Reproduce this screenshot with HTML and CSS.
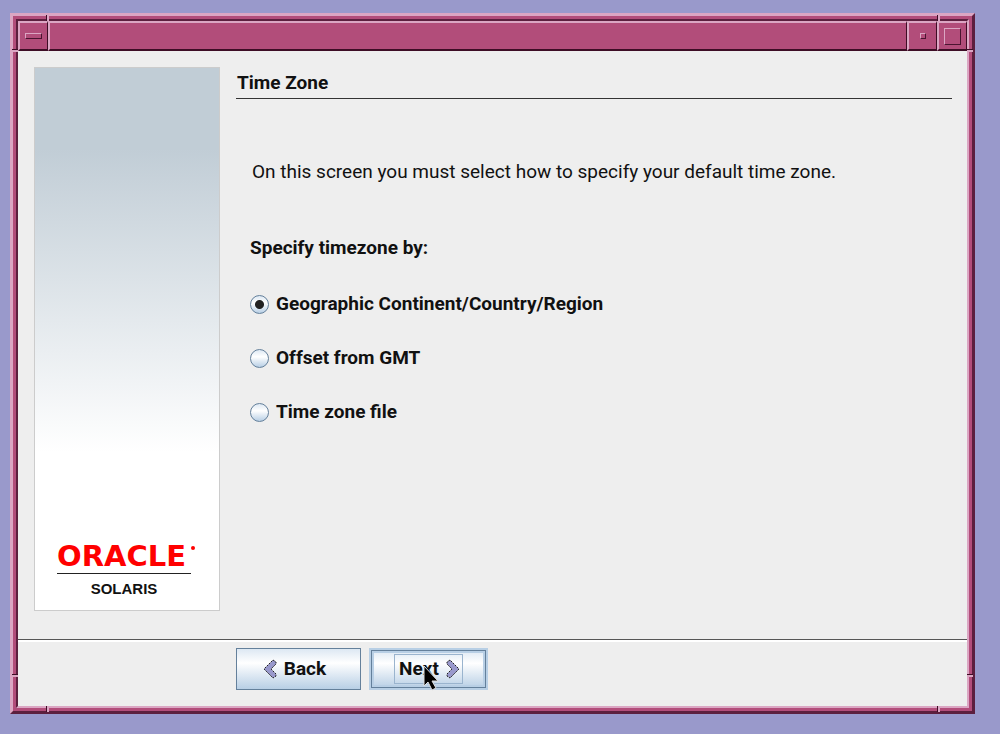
FILE: index.html
```
<!DOCTYPE html>
<html lang="en">
<head>
<meta charset="utf-8">
<title>Time Zone</title>
<link rel="stylesheet" href="styles.css">
</head>
<body>
<div class="frame">
  <span class="notch-v notch-tl"></span><span class="notch-v notch-tr"></span>
  <span class="notch-v notch-bl"></span><span class="notch-v notch-br"></span>
  <span class="notch-h notch-lt"></span><span class="notch-h notch-rt"></span>
  <span class="notch-h notch-lb"></span><span class="notch-h notch-rb"></span>
  <div class="window">
    <header class="titlebar">
      <button class="tool" type="button" aria-label="Window menu"><span class="glyph glyph-menu"></span></button>
      <div class="title"></div>
      <button class="tool" type="button" aria-label="Minimize"><span class="glyph glyph-min"></span></button>
      <button class="tool" type="button" aria-label="Maximize"><span class="glyph glyph-max"></span></button>
    </header>
    <form class="wizard">
      <div class="body">
        <aside class="banner">
          <div class="brand">
            <div class="oracle">ORACLE<span class="mark"></span></div>
            <div class="solaris">SOLARIS</div>
          </div>
        </aside>
        <main class="content">
          <h1 class="heading">Time Zone</h1>
          <p class="intro">On this screen you must select how to specify your default time zone.</p>
          <fieldset class="choices">
            <legend class="legend">Specify timezone by:</legend>
            <label class="choice"><input class="radio" type="radio" name="tz" checked>Geographic Continent/Country/Region</label>
            <label class="choice"><input class="radio" type="radio" name="tz">Offset from GMT</label>
            <label class="choice"><input class="radio" type="radio" name="tz">Time zone file</label>
          </fieldset>
        </main>
      </div>
      <footer class="actions">
        <button class="btn btn-back" type="button">
          <svg class="chevron" viewBox="0 0 14 20"><path class="chevron-fill" d="M10 1l3 2v2l-5 5 5 5v2l-3 2L1 10z"/></svg>
          Back
        </button>
        <button class="btn btn-next" type="button">
          <span class="focus">Next
            <svg class="chevron" viewBox="0 0 14 20"><path class="chevron-fill" d="M4 1L1 3v2l5 5-5 5v2l3 2 9-9z"/></svg>
          </span>
          <svg class="cursor" viewBox="0 0 16 26"><path d="M1 1v20l4-4 4 8 4-2-4-7h6z"/></svg>
        </button>
      </footer>
    </form>
  </div>
</div>
</body>
</html>
```
FILE: styles.css
```
* { box-sizing: border-box; }

body {
  margin: 0;
  min-height: 100vh;
  padding: 13px 25px 20px 10px;
  display: flex;
  background: #9999cb;
  color: #111;
  font-family: Roboto, "Liberation Sans", sans-serif;
  font-size: 19px;
  line-height: 24px;
}

.frame {
  position: relative;
  flex: 1;
  display: flex;
  background: #b24d7a;
  border-style: solid;
  border-width: 3px;
  border-color: #dba6c3 #5c1f3e #5c1f3e #dba6c3;
}

.window {
  flex: 1;
  display: flex;
  flex-direction: column;
  margin: 3px;
  border-style: solid;
  border-width: 2px;
  border-color: #5c1f3e #dba6c3 #dba6c3 #5c1f3e;
}

.titlebar {
  display: flex;
  height: 30px;
}

.tool, .title {
  margin: 0;
  padding: 0;
  background: #b24d7a;
  border-style: solid;
  border-width: 2px 1px 2px 2px;
  border-color: #dba6c3 #3d0d25 #3d0d25 #dba6c3;
}

.tool {
  width: 30px;
  display: grid;
  place-items: center;
}

.title { flex: 1; }

.glyph {
  border-style: solid;
  border-width: 1px;
  border-color: #dba6c3 #4a1430 #4a1430 #dba6c3;
}

.glyph-menu { width: 17px; height: 6px; }
.glyph-min { width: 6px; height: 6px; }
.glyph-max { width: 17px; height: 17px; }

.notch-v, .notch-h { position: absolute; }

.notch-v {
  width: 3px;
  height: 6px;
  border-left: 1px solid #3d0d25;
  border-right: 2px solid #dba6c3;
}

.notch-h {
  width: 6px;
  height: 3px;
  border-top: 1px solid #3d0d25;
  border-bottom: 2px solid #dba6c3;
}

.notch-tl { left: 33px; top: -1px; }
.notch-tr { right: 32px; top: -1px; }
.notch-bl { left: 33px; bottom: -1px; }
.notch-br { right: 32px; bottom: -1px; }
.notch-lt { left: -1px; top: 33px; }
.notch-rt { right: -1px; top: 33px; }
.notch-lb { left: -1px; bottom: 34px; }
.notch-rb { right: -1px; bottom: 34px; }

.wizard {
  flex: 1;
  display: flex;
  flex-direction: column;
  background: #eee;
}

.body {
  flex: 1;
  display: flex;
  gap: 16px;
  padding: 16px 15px 28px 16px;
}

.banner {
  width: 186px;
  display: flex;
  flex-direction: column;
  justify-content: flex-end;
  padding: 0 22px 10px;
  border: 1px solid #ccc;
  background: linear-gradient(#c1cdd6 0%, #c1cdd6 15%, #fff 71%);
}

.brand { text-align: center; }

.oracle {
  position: relative;
  padding-bottom: 4px;
  border-bottom: 1px solid #222;
  color: #f00;
  font-family: "DejaVu Sans", sans-serif;
  font-size: 29px;
  font-weight: bold;
  line-height: 26px;
  text-align: left;
}

.mark {
  position: absolute;
  right: -4px;
  top: 3px;
  width: 4px;
  height: 4px;
  border-radius: 50%;
  background: #f00;
}

.oracle, .solaris { width: 134px; }

.solaris {
  padding-top: 4px;
  font-family: "Liberation Sans", sans-serif;
  font-size: 15px;
  font-weight: bold;
  line-height: 22px;
}

.content { flex: 1; }

.heading {
  margin: 0;
  padding: 4px 1px 3px;
  border-bottom: 1px solid #333;
  font-size: 19px;
  line-height: 24px;
}

.intro {
  margin: 61px 16px 52px;
}

.choices {
  margin: 0;
  padding: 0 14px;
  border: 0;
  display: flex;
  flex-direction: column;
  gap: 30px;
  font-weight: bold;
}

.legend {
  padding: 0;
  margin-bottom: 32px;
}

.choice {
  display: flex;
  align-items: center;
  gap: 7px;
}

.radio {
  appearance: none;
  width: 19px;
  height: 19px;
  margin: 0;
  border: 1px solid #64809b;
  border-radius: 50%;
  background: linear-gradient(#dde8f3, #fff 40%, #b8cfe5);
}

.radio:checked {
  background: radial-gradient(circle, #222 0 4px, transparent 5px), linear-gradient(#dde8f3, #fff 40%, #b8cfe5);
}

.actions {
  display: flex;
  gap: 8px;
  padding: 8px 16px 16px 218px;
  border-top: 1px solid #555;
  box-shadow: inset 0 2px #fff;
}

.btn {
  height: 42px;
  padding: 0;
  display: flex;
  align-items: center;
  justify-content: center;
  gap: 7px;
  background: linear-gradient(#dde8f3, #fff 35%, #b8cfe5);
  border: 1px solid #64809b;
  color: #111;
  font-family: inherit;
  font-size: 19px;
  font-weight: bold;
  line-height: 24px;
}

.btn-back {
  width: 125px;
  padding-right: 8px;
}

.btn-next {
  position: relative;
  width: 119px;
  border: 2px solid #b8cfe5;
  box-shadow: inset 0 0 0 1px #64809b, inset 0 0 0 3px #b8cfe5;
}

.focus {
  display: flex;
  align-items: center;
  gap: 7px;
  height: 30px;
  padding: 0 2px 0 4px;
  border: 1px solid #9ab4ce;
}

.chevron {
  width: 14px;
  height: 20px;
}

.chevron-fill {
  fill: #9999cc;
  stroke: #222;
  stroke-dasharray: 2 1;
}

.cursor {
  position: absolute;
  left: 52px;
  top: 15px;
  width: 16px;
  height: 26px;
  fill: #000;
  stroke: #ddd;
}
```
